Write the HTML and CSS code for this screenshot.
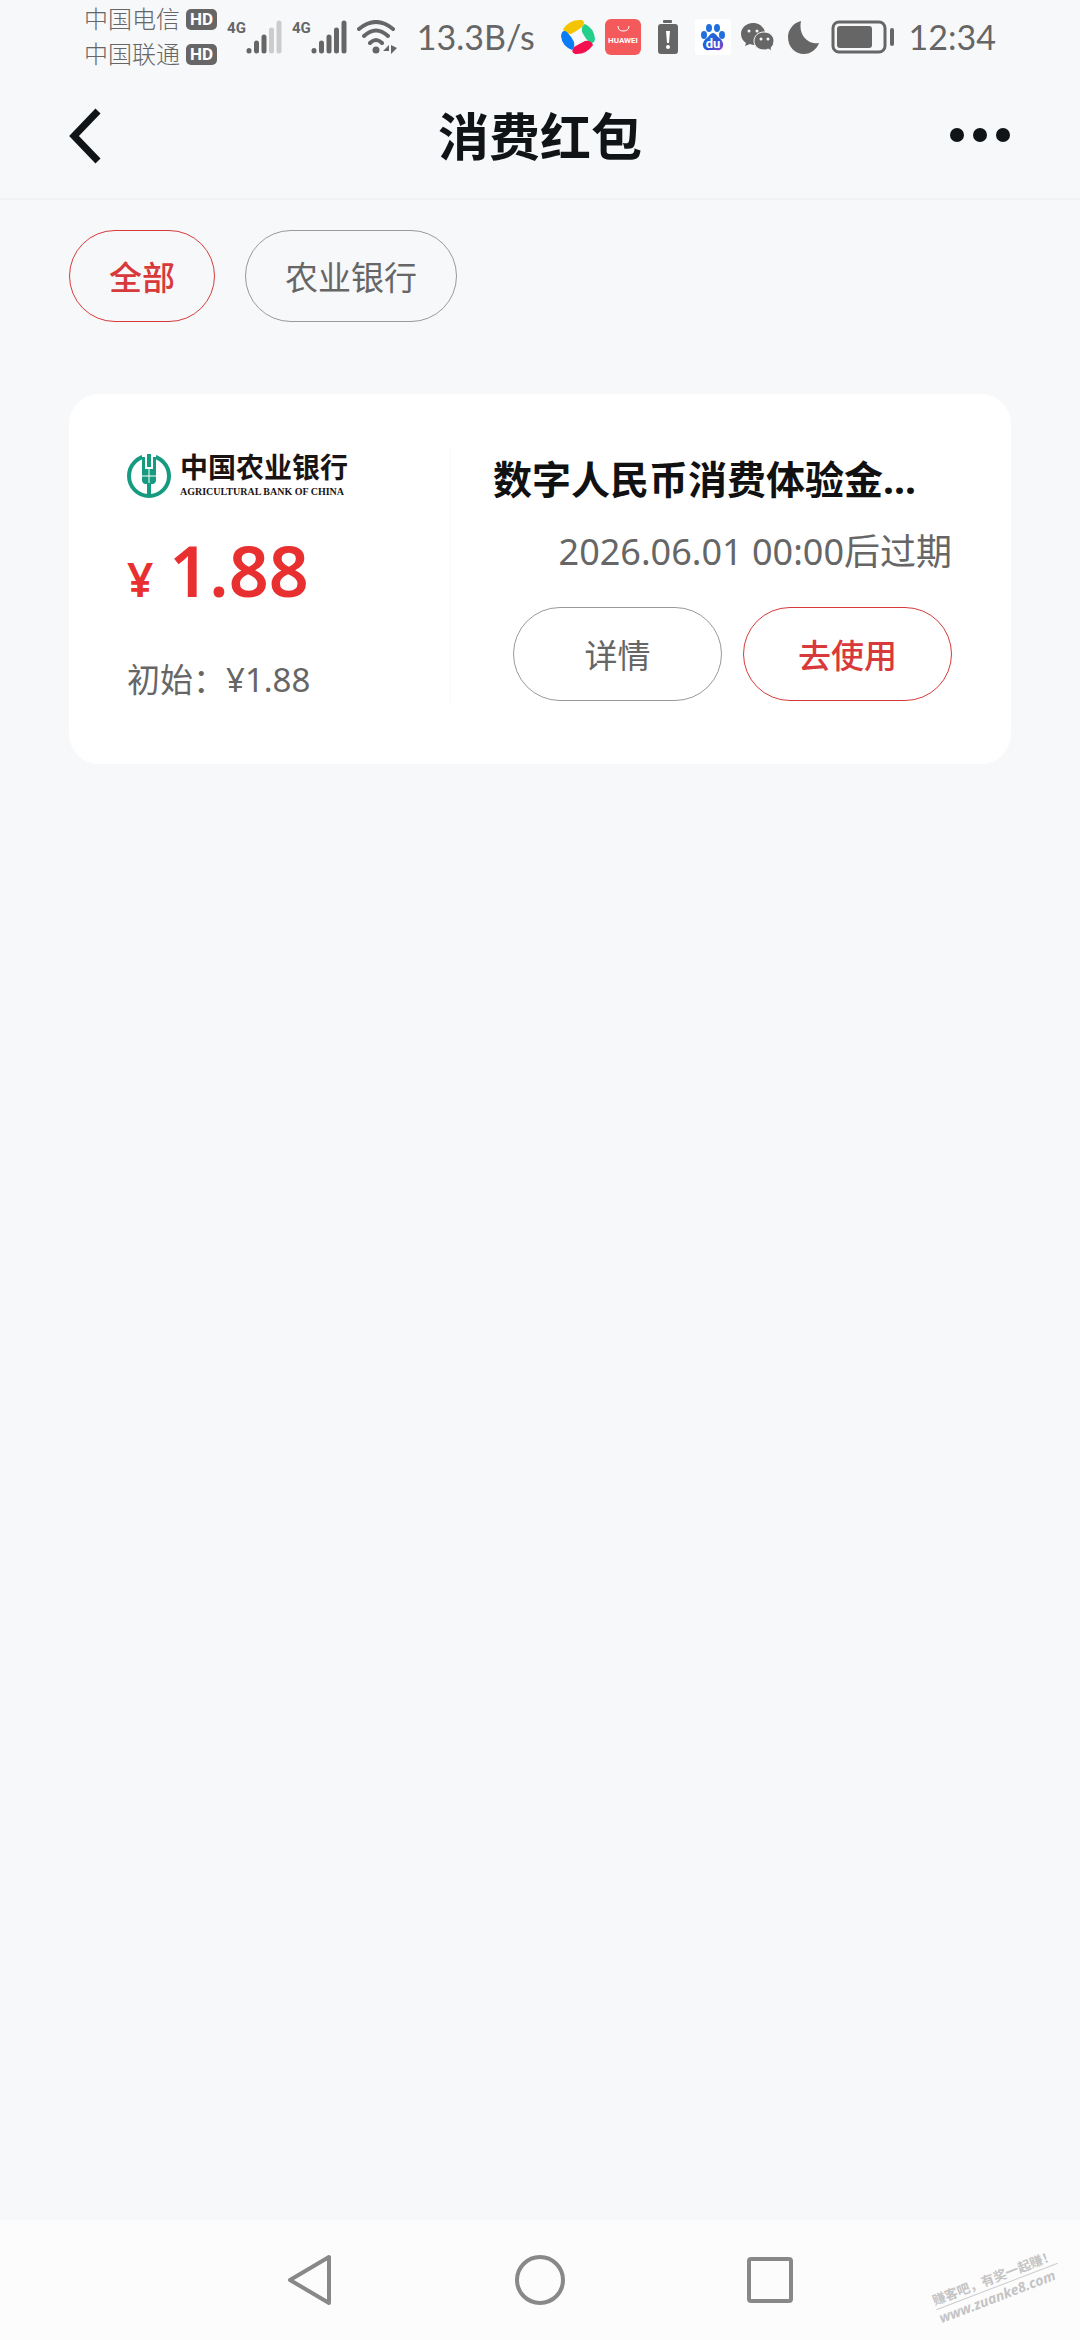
FILE: index.html
```html
<!DOCTYPE html>
<html lang="zh-CN">
<head>
    <meta charset="UTF-8">
    <meta name="viewport" content="width=device-width, initial-scale=1.0">
    <title>消费红包</title>
    <link rel="stylesheet" href="styles.css">
</head>
<body>
    <div class="status-bar">
        <div class="carriers">
            <div class="carrier">中国电信 <span class="hd">HD</span></div>
            <div class="carrier">中国联通 <span class="hd">HD</span></div>
        </div>
        <div class="signal">
            <span class="net">4G</span>
            <svg width="36" height="34" viewBox="0 0 36 34" stroke="#666" stroke-width="5" stroke-linecap="round">
                <path d="M3 30.500V31M10.500 23V31M18 17V31"/>
                <path d="M25.500 10V31M33 3V31" stroke="#ccc"/>
            </svg>
        </div>
        <div class="signal">
            <span class="net">4G</span>
            <svg width="36" height="34" viewBox="0 0 36 34" stroke="#666" stroke-width="5" stroke-linecap="round">
                <path d="M3 30.500V31M10.500 23V31M18 17V31M25.500 10V31M33 3V31"/>
            </svg>
        </div>
        <svg class="wifi" width="40" height="34" viewBox="0 0 40 34" fill="none" stroke="#666" stroke-width="4" stroke-linecap="round">
            <path d="M2 9Q19 -5 36 9M7 16Q19 5 31 16M13 23Q19 17 25 23"/>
            <circle cx="19" cy="30" r="3.500" fill="#666" stroke="none"/>
            <path d="M32 25V34V31H26ZM34 25L40 28L34 34Z" fill="#666" stroke="none"/>
        </svg>
        <span class="speed">13.3B/s</span>
        <div class="tray">
            <!-- phone manager -->
            <svg width="36" height="36" viewBox="0 0 36 36">
                <path d="M3 10Q10 0 22 1Q26 3 22 8Q17 12 11 15Q5 15 3 10Z" fill="#f5c400"/>
                <path d="M25 5Q34 9 35 20Q34 26 29 23Q25 19 22 13Q21 7 25 5Z" fill="#22d08c"/>
                <path d="M33 26Q26 36 15 35Q10 33 14 28Q19 25 25 22Q31 21 33 26Z" fill="#f4104f"/>
                <path d="M12 31Q2 27 1 17Q2 10 7 13Q11 17 14 23Q15 29 12 31Z" fill="#0a7cf5"/>
            </svg>
            <!-- app gallery -->
            <svg width="36" height="36" viewBox="0 0 36 36">
                <rect width="36" height="36" rx="6" fill="#f4595b"/>
                <path d="M13 7Q13 12 18 12Q24 12 24 7" fill="none" stroke="#fff" stroke-width="1"/>
                <text class="huawei" x="18" y="24" text-anchor="middle">HUAWEI</text>
            </svg>
            <!-- low battery warning -->
            <svg width="36" height="36" viewBox="0 0 36 36">
                <rect x="13" y="1" width="9" height="3" rx="1" fill="#666"/>
                <rect x="8" y="5" width="20" height="30" rx="3" fill="#666"/>
                <path d="M16 12H20L19 24H17Z" fill="#fff"/>
                <circle cx="18" cy="28" r="2" fill="#fff"/>
            </svg>
            <!-- baidu -->
            <svg width="36" height="36" viewBox="0 0 36 36">
                <defs>
                    <linearGradient id="paw" x1="0" y1="0" x2="1" y2="1">
                        <stop offset="0" stop-color="#1777e8"/>
                        <stop offset="0.600" stop-color="#2c55cf"/>
                        <stop offset="1" stop-color="#9a3fd0"/>
                    </linearGradient>
                </defs>
                <rect width="36" height="36" rx="3" fill="#fff"/>
                <ellipse cx="14" cy="9" rx="3" ry="4" fill="#1f6fdc"/>
                <ellipse cx="22" cy="9" rx="3" ry="4" fill="#1f6fdc"/>
                <ellipse cx="9" cy="16" rx="3" ry="4" fill="#1f6fdc"/>
                <ellipse cx="27" cy="16" rx="3" ry="4" fill="#1f6fdc"/>
                <path d="M18 14Q20 14 23 18Q29 22 28 27Q27 32 21 31H15Q9 32 8 27Q7 22 13 18Q16 14 18 14Z" fill="url(#paw)"/>
                <text class="baidu" x="18" y="29" text-anchor="middle">du</text>
            </svg>
            <!-- wechat -->
            <svg width="36" height="36" viewBox="0 0 36 36">
                <path d="M13 4C6 4 1 9 1 15C1 19 3 22 6 24L5 27L10 25Q12 26 15 26C21 26 25 21 25 15C25 9 20 4 13 4Z" fill="#666"/>
                <path d="M24 13C18 13 14 17 14 22C14 27 18 31 24 31Q27 31 28 30L32 32L31 29Q34 26 34 22C34 17 30 13 24 13Z" fill="#666" stroke="#f7f8fa" stroke-width="1"/>
                <g fill="#f7f8fa">
                    <circle cx="9" cy="12" r="1.500"/>
                    <circle cx="17" cy="12" r="1.500"/>
                    <circle cx="21" cy="20" r="1.500"/>
                    <circle cx="28" cy="20" r="1.500"/>
                </g>
            </svg>
            <!-- do not disturb -->
            <svg width="36" height="36" viewBox="0 0 36 36">
                <path d="M16 2C8 4 3 11 3 18C3 28 10 35 19 35C26 35 32 30 34 24C24 26 13 17 16 2Z" fill="#666"/>
            </svg>
            <svg width="65" height="36" viewBox="0 0 65 36">
                <rect x="3" y="3" width="52" height="30" rx="6" fill="none" stroke="#666" stroke-width="3"/>
                <rect x="7" y="7" width="35" height="22" rx="3" fill="#666"/>
                <rect x="60" y="9" width="4" height="18" rx="2" fill="#666"/>
            </svg>
        </div>
        <span class="time">12:34</span>
    </div>

    <header class="header">
        <button class="icon-btn" type="button" aria-label="返回">
            <svg width="33" height="56" viewBox="0 0 33 56" fill="none" stroke="#111417" stroke-width="7">
                <path d="M29 3L5 28L29 53"/>
            </svg>
        </button>
        <h1>消费红包</h1>
        <button class="icon-btn" type="button" aria-label="更多">
            <svg width="62" height="56" viewBox="0 0 62 56" fill="#111417">
                <circle cx="8" cy="27" r="7"/>
                <circle cx="31" cy="27" r="7"/>
                <circle cx="54" cy="27" r="7"/>
            </svg>
        </button>
    </header>

    <main>
        <div class="filters">
            <button class="pill active" type="button">全部</button>
            <button class="pill" type="button">农业银行</button>
        </div>

        <section class="coupon">
            <div class="amount">
                <div class="bank">
                    <svg width="44" height="44" viewBox="0 0 44 44">
                        <circle cx="22" cy="22" r="20" fill="none" stroke="#169b80" stroke-width="4"/>
                        <path d="M15 0H29V6H15Z" fill="#fff"/>
                        <g fill="#169b80">
                            <path d="M20 0H24V13H20Z"/>
                            <path d="M15 3H18V15H21.500V21.500H15ZM29 3H26V15H22.500V21.500H29Z"/>
                            <path d="M15 22.500H21.500V30H18Q15 29 15 26ZM29 22.500H22.500V30H26Q29 29 29 26Z"/>
                            <path d="M20 29H24V42H20Z"/>
                        </g>
                    </svg>
                    <div class="bank-name">
                        <div class="bank-cn">中国农业银行</div>
                        <div class="bank-en">AGRICULTURAL BANK OF CHINA</div>
                    </div>
                </div>
                <p class="price"><span class="yen">¥</span>1.88</p>
                <p class="initial">初始：¥1.88</p>
            </div>
            <div class="info">
                <h2>数字人民币消费体验金...</h2>
                <p class="expire">2026.06.01 00:00后过期</p>
                <div class="actions">
                    <button class="pill" type="button">详情</button>
                    <button class="pill active" type="button">去使用</button>
                </div>
            </div>
        </section>
    </main>

    <nav class="nav-bar">
        <button class="icon-btn" type="button" aria-label="后退">
            <svg width="54" height="54" viewBox="0 0 54 54" fill="none" stroke="#888" stroke-width="4" stroke-linejoin="round">
                <path d="M46 4V50L7 27Z"/>
            </svg>
        </button>
        <button class="icon-btn" type="button" aria-label="主屏幕">
            <svg width="54" height="54" viewBox="0 0 54 54" fill="none" stroke="#888" stroke-width="4">
                <circle cx="27" cy="27" r="23"/>
            </svg>
        </button>
        <button class="icon-btn" type="button" aria-label="最近任务">
            <svg width="54" height="54" viewBox="0 0 54 54" fill="none" stroke="#888" stroke-width="4">
                <rect x="6" y="6" width="42" height="42" rx="2"/>
            </svg>
        </button>
        <div class="watermark">
            <div class="wm-cn">赚客吧，有奖一起赚！</div>
            <div class="wm-url">www.zuanke8.com</div>
        </div>
    </nav>
</body>
</html>
```

FILE: styles.css
```css
* {
    box-sizing: border-box;
}

body {
    display: flex;
    flex-direction: column;
    min-height: 100vh;
    margin: 0;
    background-color: #f7f8fa;
    color: #666;
    font-family: "Noto Sans", "Noto Sans CJK SC", sans-serif;
}

h1, h2, p {
    margin: 0;
}

button {
    font-family: inherit;
    cursor: pointer;
}

svg {
    display: block;
}

.status-bar {
    display: flex;
    align-items: center;
    height: 73px;
    padding: 0 84px;
}

.carriers {
    display: flex;
    flex-direction: column;
    gap: 11px;
}

.carrier {
    display: flex;
    align-items: center;
    gap: 6px;
    font-size: 24px;
    font-weight: 300;
    line-height: 24px;
}

.hd {
    padding: 0 4px;
    border-radius: 5px;
    background-color: #666;
    color: #fff;
    font-family: Roboto, sans-serif;
    font-size: 17px;
    font-weight: 700;
    line-height: 21px;
}

.signal {
    display: flex;
    align-items: flex-start;
    margin-left: 10px;
}

.net {
    font-family: Roboto, sans-serif;
    font-size: 15px;
    font-weight: 700;
    line-height: 16px;
}

.wifi {
    margin-left: 10px;
}

.speed, .time {
    font-family: Lato, sans-serif;
    font-size: 34px;
    font-weight: 400;
    line-height: 40px;
}

.speed {
    margin-left: 20px;
}

.tray {
    display: flex;
    gap: 9px;
    margin-left: auto;
}

.time {
    margin-left: 14px;
}

.huawei {
    fill: #fff;
    font: 700 8px Roboto, sans-serif;
}

.baidu {
    fill: #fff;
    font: 700 13px Roboto, sans-serif;
}

.header {
    display: flex;
    align-items: center;
    justify-content: space-between;
    height: 127px;
    padding: 0 69px;
    border-bottom: 2px solid #f1f2f4;
}

.header .icon-btn {
    display: flex;
    width: 62px;
}

h1 {
    color: #111417;
    font-size: 51px;
    font-weight: 700;
    line-height: 64px;
}

.icon-btn {
    padding: 0;
    border: 0;
    background: none;
}

main {
    flex: 1;
    padding: 30px 69px;
}

.filters {
    display: flex;
    gap: 30px;
    margin-bottom: 72px;
}

.pill {
    height: 92px;
    padding: 0 39px;
    border: 1px solid #999;
    border-radius: 46px;
    background: none;
    color: #666;
    font-size: 33px;
}

.pill.active {
    border-color: #d8393a;
    color: #d8393a;
    font-weight: 500;
}

.coupon {
    display: flex;
    padding: 54px 59px 60px 58px;
    border-radius: 30px;
    background-color: #fff;
}

.amount {
    flex: 0 0 324px;
    border-right: 1px solid #f8f8f9;
}

.bank {
    display: flex;
    gap: 9px;
    padding-top: 6px;
}

.bank-name {
    color: #1a1414;
    white-space: nowrap;
}

.bank-cn {
    font-family: "Liberation Serif", "Noto Sans CJK SC", serif;
    font-size: 28px;
    font-weight: 700;
    line-height: 30px;
}

.bank-en {
    font-family: "Liberation Serif", serif;
    font-size: 10px;
    font-weight: 700;
    line-height: 16px;
}

.price {
    margin-top: 30px;
    color: #e93030;
    font-size: 70px;
    font-weight: 600;
    line-height: 80px;
}

.yen {
    margin-right: 16px;
    font-size: 46px;
}

.initial {
    margin-top: 37px;
    font-size: 33px;
    line-height: 48px;
}

.info {
    flex: 1;
    display: flex;
    flex-direction: column;
    padding-left: 42px;
}

h2 {
    padding-top: 6px;
    color: #111;
    font-size: 39px;
    font-weight: 700;
    line-height: 50px;
    white-space: nowrap;
}

.expire {
    margin-top: 24px;
    font-size: 36px;
    line-height: 48px;
    text-align: right;
}

.actions {
    display: flex;
    justify-content: flex-end;
    gap: 21px;
    margin-top: 31px;
}

.actions .pill {
    width: 209px;
    height: 94px;
    border-radius: 47px;
}

.nav-bar {
    position: relative;
    display: flex;
    align-items: center;
    justify-content: center;
    gap: 176px;
    height: 120px;
    background-color: #fcfcfd;
}

/* stamp laid over the navigation bar */
.watermark {
    position: absolute;
    right: 18px;
    bottom: 35px;
    color: #c4c4c4;
    font-size: 13px;
    font-weight: 700;
    line-height: 18px;
    transform: rotate(-21deg);
}

.wm-cn {
    border-bottom: 1px solid #ccc;
}

.wm-url {
    font-style: italic;
    font-size: 14px;
}
```
